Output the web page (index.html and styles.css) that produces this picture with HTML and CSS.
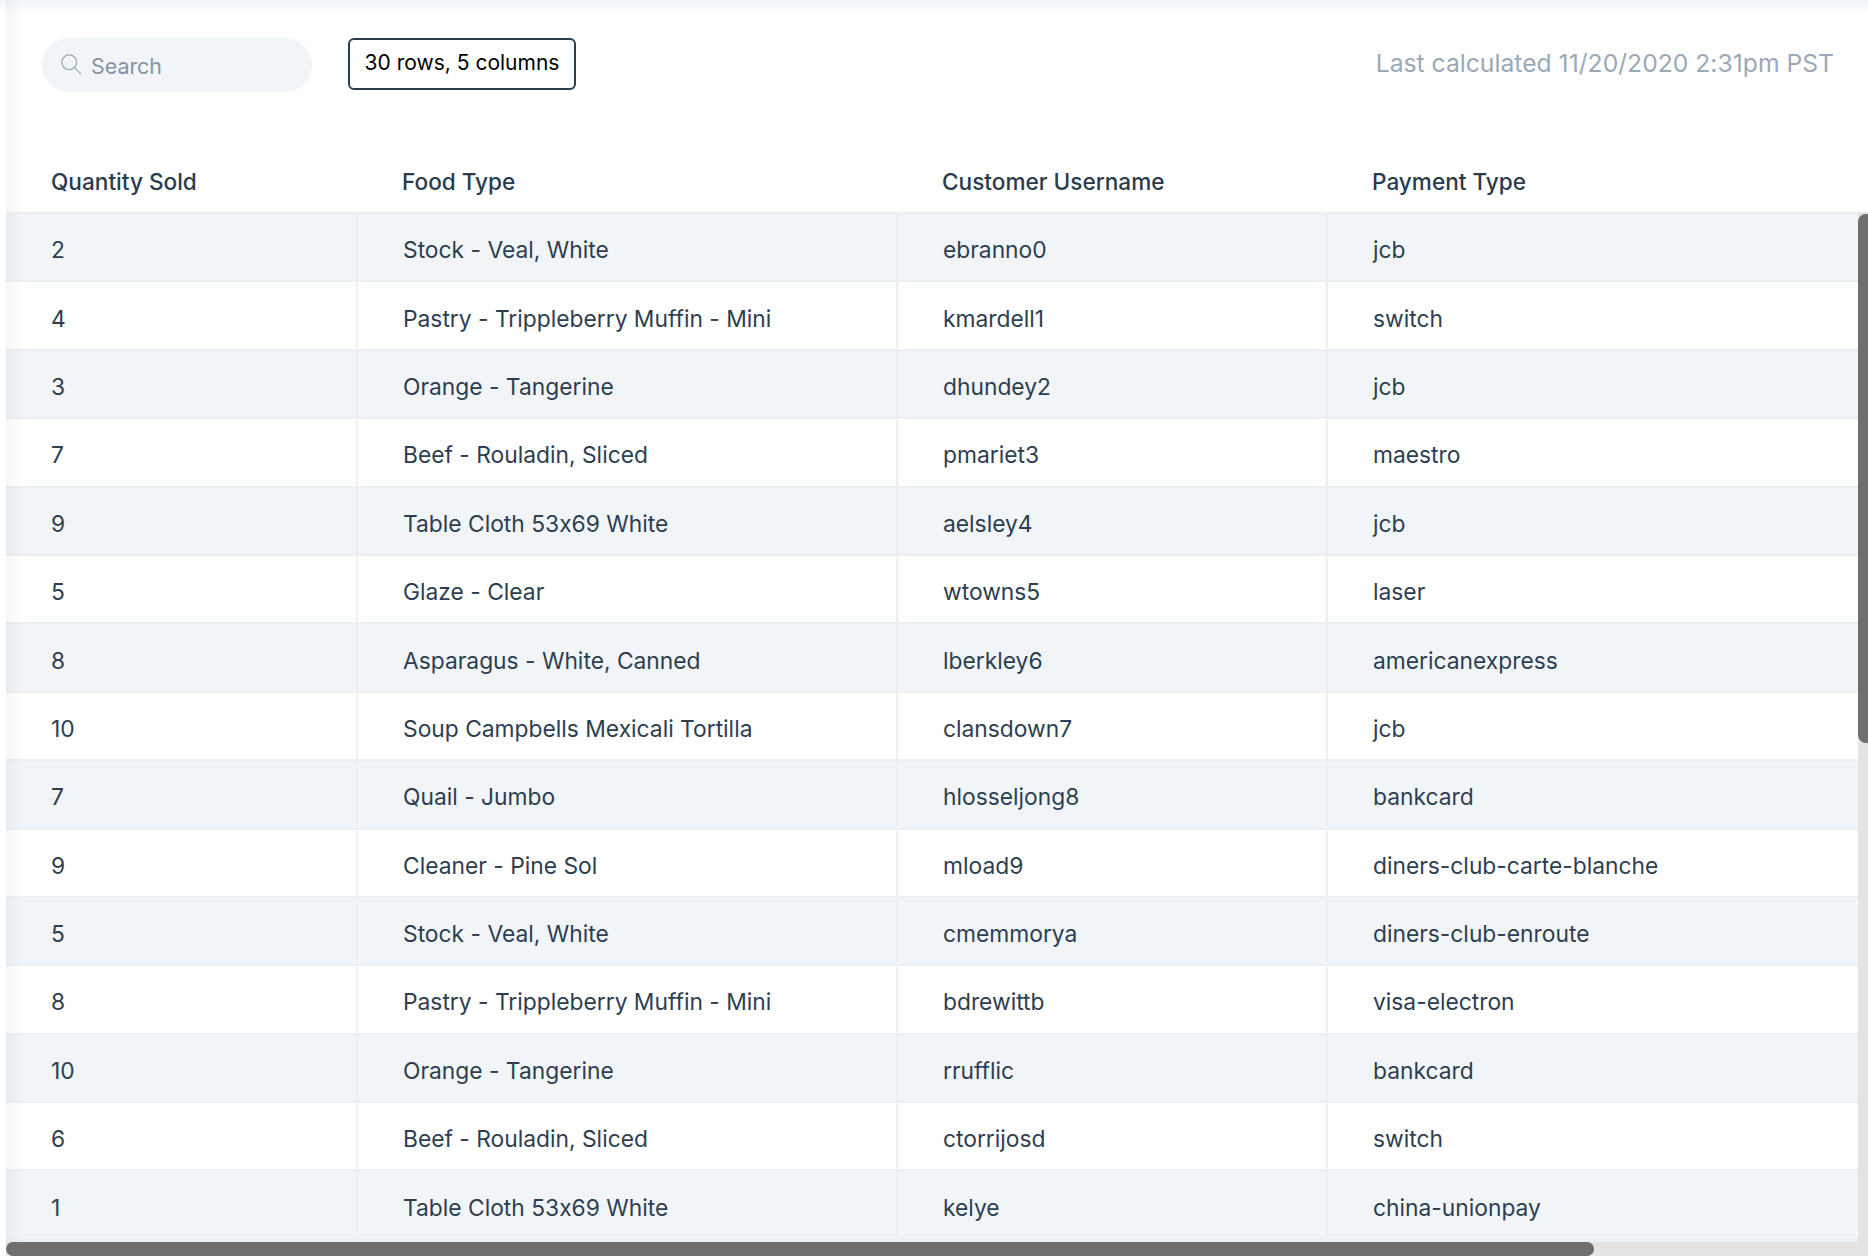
FILE: index.html
```html
<!DOCTYPE html>
<html lang="en">
<head>
<meta charset="utf-8">
<title>Table</title>
<link rel="stylesheet" href="styles.css">
</head>
<body>
<div class="page">
  <div class="toolbar">
    <label class="search">
      <svg class="search-icon" viewBox="0 0 22 22" width="22" height="22" fill="none" stroke="#9aa9b7" stroke-width="1.3" stroke-linecap="round"><circle cx="9.2" cy="9.2" r="7.4"/><path d="M14.6 14.6 20.6 20.6"/></svg>
      <span class="placeholder">Search</span>
    </label>
    <div class="count">30 rows, 5 columns</div>
    <div class="calc">Last calculated 11/20/2020 2:31pm PST</div>
  </div>
  <div class="head">
    <div class="hc">Quantity Sold</div>
    <div class="hc">Food Type</div>
    <div class="hc">Customer Username</div>
    <div class="hc">Payment Type</div>
  </div>
  <div class="scroller">
    <div class="table">
      <div class="row"><div>2</div><div>Stock - Veal, White</div><div>ebranno0</div><div>jcb</div></div>
      <div class="row"><div>4</div><div>Pastry - Trippleberry Muffin - Mini</div><div>kmardell1</div><div>switch</div></div>
      <div class="row"><div>3</div><div>Orange - Tangerine</div><div>dhundey2</div><div>jcb</div></div>
      <div class="row"><div>7</div><div>Beef - Rouladin, Sliced</div><div>pmariet3</div><div>maestro</div></div>
      <div class="row"><div>9</div><div>Table Cloth 53x69 White</div><div>aelsley4</div><div>jcb</div></div>
      <div class="row"><div>5</div><div>Glaze - Clear</div><div>wtowns5</div><div>laser</div></div>
      <div class="row"><div>8</div><div>Asparagus - White, Canned</div><div>lberkley6</div><div>americanexpress</div></div>
      <div class="row"><div>10</div><div>Soup Campbells Mexicali Tortilla</div><div>clansdown7</div><div>jcb</div></div>
      <div class="row"><div>7</div><div>Quail - Jumbo</div><div>hlosseljong8</div><div>bankcard</div></div>
      <div class="row"><div>9</div><div>Cleaner - Pine Sol</div><div>mload9</div><div>diners-club-carte-blanche</div></div>
      <div class="row"><div>5</div><div>Stock - Veal, White</div><div>cmemmorya</div><div>diners-club-enroute</div></div>
      <div class="row"><div>8</div><div>Pastry - Trippleberry Muffin - Mini</div><div>bdrewittb</div><div>visa-electron</div></div>
      <div class="row"><div>10</div><div>Orange - Tangerine</div><div>rrufflic</div><div>bankcard</div></div>
      <div class="row"><div>6</div><div>Beef - Rouladin, Sliced</div><div>ctorrijosd</div><div>switch</div></div>
      <div class="row"><div>1</div><div>Table Cloth 53x69 White</div><div>kelye</div><div>china-unionpay</div></div>
      <div class="row-rest"></div>
    </div>
    <div class="vbar"><div class="vthumb"></div></div>
    <div class="hbar"><div class="hthumb"></div></div>
  </div>
  <div class="shade-top"></div>
  <div class="shade-left"></div>
</div>
</body>
</html>
```
FILE: styles.css
```css
* { box-sizing: border-box; }
html, body { margin: 0; height: 100%; overflow: hidden; background: #fff; }
body { font-family: Inter, "Liberation Sans", sans-serif; color: #2d3e50; font-feature-settings: "calt" 0; }
.page { position: relative; height: 1256px; padding-left: 6px; display: flex; flex-direction: column; }
.toolbar { height: 150px; flex: none; display: flex; align-items: flex-start; padding: 38px 34px 0 36px; }
.search { width: 270px; height: 54px; border-radius: 27px; background: #f1f5f8; display: flex; align-items: center; padding-left: 18px; gap: 9px; }
.search-icon { flex: none; margin-top: -3px; }
.placeholder { font-size: 21.4px; color: #8794a1; padding-top: 1px; }
.count { margin-left: 36px; width: 228px; height: 52px; border: 2px solid #2d3e50; border-radius: 6px; display: flex; align-items: center; justify-content: center; font-size: 21px; color: #000; padding-bottom: 4px; }
.calc { margin-left: auto; font-size: 24.7px; line-height: 51px; color: #9aa9b7; }
.head { flex: none; height: 62px; display: grid; grid-template-columns: 350px 540px 430px 1fr; font-size: 22.6px; font-weight: 500; color: #2a3b4d; }
.hc { padding: 16px 0 0 46px; line-height: 32px; }
.hc:first-child { padding-left: 45px; }
.scroller { position: relative; flex: 1; min-height: 0; overflow: hidden; }
.vbar { position: absolute; top: 0; right: 0; bottom: 0; width: 10px; background: #e3e3e3; }
.vthumb { height: 529px; margin-top: 2px; background: #6f6f6f; border-radius: 8px 0 0 8px; }
.hbar { position: absolute; left: 0; right: 0; bottom: 0; height: 14px; background: #e3e3e3; }
.hthumb { width: 1588px; height: 14px; background: #6f6f6f; border-radius: 7px; }
.table { width: 2160px; }
.row { height: 68.4px; display: grid; grid-template-columns: 350px 540px 430px 1fr; border-top: 2px solid #ecf0f3; font-size: 22.8px; background: #fff; }
.row:nth-child(odd) { background: #f1f5f8; }
.row > div { display: flex; align-items: center; padding-left: 45px; padding-top: 5px; border-left: 2px solid #ecf0f3; }
.row > div:first-child { border-left: 0; padding-left: 45px; }
.row-rest { height: 100px; background: linear-gradient(#ecf0f3 0 4px, #fff 4px); }
.shade-top { position: absolute; left: 0; right: 0; top: 0; height: 16px; background: linear-gradient(#f1f5f8, rgba(241, 245, 248, 0)); pointer-events: none; }
.shade-left { position: absolute; left: 6px; top: 0; bottom: 14px; width: 16px; background: linear-gradient(90deg, rgba(0, 20, 40, .035), rgba(0, 20, 40, 0)); pointer-events: none; }
```
